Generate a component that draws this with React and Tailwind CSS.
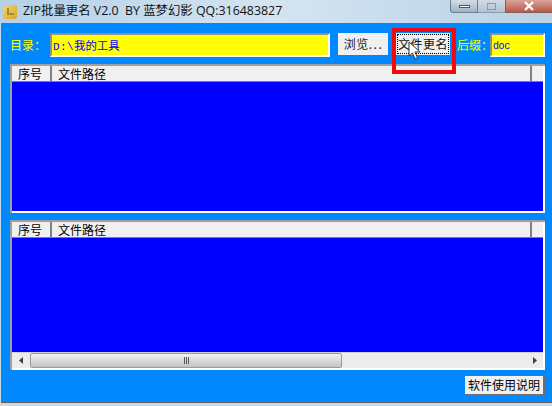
import { useState } from 'react'

const cjk = '"Noto Sans CJK SC", sans-serif'

const ListHeader = () => {
  return (
    <div className="flex h-[15px] shrink-0 bg-[#f0f0f0] text-[12px] leading-[15px] text-black">
      <div className="w-[40px] border-r-2 border-[#808080] pl-[6px]">序号</div>
      <div className="flex-1 border-r-2 border-[#808080] pl-[6px]">文件路径</div>
      <div className="w-[11px]"></div>
    </div>
  )
}

const ListBox = ({ className, children }) => {
  return (
    <div className={`flex flex-col border-2 border-b-0 border-r-0 border-[#a0a0a0] ${className}`}>
      <div className="flex min-h-0 flex-1 flex-col border-b-2 border-r-2 border-white">
        <ListHeader />
        <div className="h-[1px] shrink-0 bg-[#808080]"></div>
        <div className="flex-1 bg-[#0000ff]"></div>
        {children}
      </div>
    </div>
  )
}

const Scrollbar = () => {
  return (
    <div className="flex h-[16px] shrink-0 items-center border-t border-[#d0d0d0] bg-[#ececec]">
      <div className="flex w-[18px] justify-center">
        <svg width="5" height="7" viewBox="0 0 5 7"><path d="M4 0 L0 3.5 L4 7 Z" fill="#404040" /></svg>
      </div>
      <div className="flex h-[15px] w-[312px] items-center justify-center rounded-[2px] border border-[#9a9a9a] bg-gradient-to-b from-[#f2f2f2] to-[#c4c4c4]">
        <div className="flex gap-[1px]">
          <div className="h-[7px] w-[1px] bg-[#555]"></div>
          <div className="h-[7px] w-[1px] bg-[#555]"></div>
          <div className="h-[7px] w-[1px] bg-[#555]"></div>
        </div>
      </div>
      <div className="flex-1"></div>
      <div className="flex w-[17px] justify-center">
        <svg width="5" height="7" viewBox="0 0 5 7"><path d="M1 0 L5 3.5 L1 7 Z" fill="#404040" /></svg>
      </div>
    </div>
  )
}

const App = () => {
  const [dir] = useState('D:\\')

  return (
    <div className="relative flex h-[406px] w-[552px] flex-col overflow-hidden bg-[#c5dbec]" style={{ fontFamily: cjk }}>
      {/* Title bar */}
      <div className="flex h-[23px] shrink-0 items-center bg-gradient-to-r from-[#b4d0e8] via-[#d4e4f1] to-[#b9d2e6]">
        <div className="ml-[3px] mr-[6px] h-[14px] w-[14px] rounded-[2px] bg-gradient-to-br from-[#f5d76a] to-[#d6a526]">
          <div className="ml-[4px] mt-[3px] h-[7px] w-[7px] border-b-2 border-l-2 border-[#a98a30]"></div>
        </div>
        <span className="whitespace-nowrap text-[12.4px] leading-none text-[#111]" style={{ fontFamily: '"Open Sans", "Noto Sans CJK SC", sans-serif' }}>ZIP批量更名 V2.0&nbsp; BY 蓝梦幻影 QQ:316483827</span>
        <div className="ml-auto flex h-[13px] self-start">
          <div className="flex w-[28px] items-center justify-center rounded-bl-[3px] border border-t-0 border-[#6d7f90] bg-gradient-to-b from-[#d4dee7] to-[#9fb2c4]">
            <div className="h-[3px] w-[11px] border border-[#555] bg-white"></div>
          </div>
          <div className="flex w-[27px] items-center justify-center border-b border-[#8a9bab] bg-gradient-to-b from-[#d0dbe5] to-[#b3c3d2]">
            <div className="h-[7px] w-[9px] border border-[#8b9aa8]"></div>
          </div>
          <div className="flex w-[47px] items-center justify-center border-b border-l border-[#8a5a50] bg-gradient-to-b from-[#d8a49a] to-[#b8584a]">
            <svg width="12" height="10" viewBox="0 0 12 10"><path d="M2 1 L10 9 M10 1 L2 9" stroke="#fff" strokeWidth="2.4" /></svg>
          </div>
        </div>
      </div>

      {/* Client area */}
      <div className="mb-[3px] ml-[1px] flex flex-1 flex-col border-b border-[#606060] bg-[#0088ff] pl-[9px] pr-[7px]">
        <div className="mt-[10px] flex h-[24px] shrink-0 items-start">
          <span className="w-[40px] text-[12px] leading-[24px] text-[#ffff00]">目录：</span>
          <div className="h-[24px] w-[280px] border-2 border-b-white border-l-[#909090] border-r-white border-t-[#909090] bg-[#ffff00] pl-[1px] text-[11.4px] leading-[20px] text-[#0000ff]">
            <span className="text-[11px] tracking-[0.4px]" style={{ fontFamily: '"Liberation Mono", monospace' }}>{dir}</span>
            <span>我的工具</span>
          </div>
          <button className="ml-[8px] h-[22px] w-[50px] whitespace-nowrap bg-[#f0f0f0] pl-[1px] text-[12px] leading-[20px] tracking-[0.5px] text-[#222]">
            浏览<span className="tracking-[1.5px]">...</span>
          </button>
          <button className="ml-[8px] flex h-[22px] w-[54px] items-center justify-center bg-[#f0f0f0] p-[1px]">
            <span className="flex h-full w-full items-center justify-center whitespace-nowrap border border-dotted border-black text-[12px] leading-none tracking-[0.5px] text-[#111]">文件更名</span>
          </button>
          <span className="ml-[7px] w-[33px] whitespace-nowrap text-[12px] leading-[24px] text-[#ffff00]">后缀：</span>
          <div className="h-[24px] w-[55px] border-2 border-b-white border-l-[#909090] border-r-white border-t-[#909090] bg-[#ffff00] pl-[1px] text-[10px] leading-[23px] tracking-[-0.4px] text-[#0000ff]" style={{ fontFamily: '"Liberation Mono", monospace' }}>
            doc
          </div>
        </div>

        <ListBox className="mt-[7px] h-[149px] shrink-0" />
        <ListBox className="mt-[7px] h-[150px] shrink-0">
          <Scrollbar />
        </ListBox>

        <div className="mt-[6px] flex justify-end">
          <button className="h-[20px] w-[80px] whitespace-nowrap border-b-2 border-r-2 border-[#707070] bg-[#f0f0f0] text-[12px] leading-[18px] text-black">软件使用说明</button>
        </div>
      </div>

      {/* Red annotation box and cursor */}
      <div className="absolute left-[392px] top-[28px] h-[46px] w-[64px] border-[4px] border-[#ee0a0f]"></div>
      <svg className="absolute left-[407px] top-[41px]" width="16" height="20" viewBox="0 0 16 20">
        <path d="M2 1 L2 15 L5.5 12 L8 18 L10.5 17 L8 11 L13 11 Z" fill="#fff" stroke="#333" strokeWidth="1" />
      </svg>
    </div>
  )
}

export default App
